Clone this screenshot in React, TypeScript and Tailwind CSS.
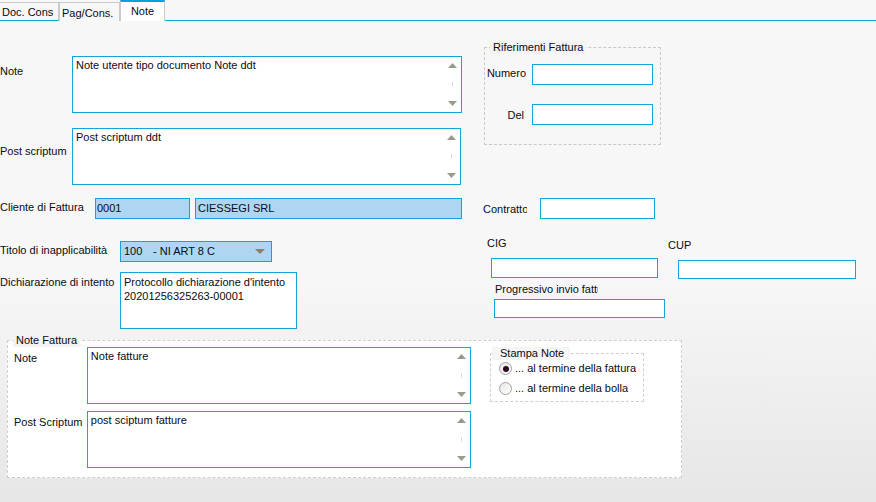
import type React from "react"

const cyan = "border-[#14a3dc]"

function Arrow({ up }: { up?: boolean }) {
  return (
    <svg width="9" height="5" viewBox="0 0 9 5">
      <path d={up ? "M0 5 L4.5 0 L9 5 Z" : "M0 0 L4.5 5 L9 0 Z"} fill="#9a9a8c" />
    </svg>
  )
}

function TextArea({ text, className, scroll = true }: { text: React.ReactNode; className: string; scroll?: boolean }) {
  return (
    <div className={`flex border ${cyan} bg-white ${className}`}>
      <div className="flex-1 pl-[3px] pt-[2px]">{text}</div>
      {scroll && (
        <div className="flex w-[17px] flex-col items-center justify-between py-[6px]">
          <Arrow up />
          <div className="h-[5px] w-px bg-[#dcdcdc]" />
          <Arrow />
        </div>
      )}
    </div>
  )
}

function Field({ className, value, filled }: { className: string; value?: string; filled?: boolean }) {
  return (
    <div className={`flex items-center border ${cyan} ${filled ? "bg-[#acd6f1]" : "bg-white"} ${className}`}>
      {value}
    </div>
  )
}

function Radio({ checked, label }: { checked?: boolean; label: string }) {
  return (
    <div className="flex h-[13px] items-center">
      <div className="flex h-[13px] w-[13px] items-center justify-center rounded-full border border-[#a3a39a] bg-gradient-to-br from-[#e6e6e6] to-white">
        {checked && <div className="h-[6px] w-[6px] rounded-full bg-[#2c0a24]" />}
      </div>
      <span className="ml-[3px] whitespace-nowrap">{label}</span>
    </div>
  )
}

export default function App() {
  return (
    <div className="h-[502px] w-[876px] overflow-hidden bg-linear-to-b from-[#f7f7f7] from-55% to-[#e6e6e6] font-['Liberation_Sans',Arial,sans-serif] text-[11px] leading-[13px] text-[#0b0b14]">
      {/* tab strip */}
      <div className="flex h-[21px] items-end">
        <div className="h-[19px] w-[59px] border-t border-r border-b border-t-[#c6cdc6] border-r-[#c6cdc6] border-b-[#14a3dc] pl-[2px] pt-[3px] whitespace-nowrap">
          Doc. Cons
        </div>
        <div className="h-[19px] w-[61px] border-x border-t border-[#c6cdc6] pl-[2px] pt-[4px] whitespace-nowrap">
          Pag/Cons.
        </div>
        <div className="h-[21px] w-[45px] border-x border-t-2 border-x-[#c6cdc6] border-t-[#0aa0dc] bg-white pt-[3px] text-center">
          Note
        </div>
        <div className="h-[21px] flex-1 border-b border-[#14a3dc]" />
      </div>

      <div className="flex">
        {/* left column */}
        <div className="flex w-[462px] flex-col">
          <div className="mt-[35px] flex h-[57px]">
            <div className="w-[72px] pt-[9px]">Note</div>
            <TextArea className="w-[390px]" text="Note utente tipo documento Note ddt" />
          </div>
          <div className="mt-[15px] flex h-[57px]">
            <div className="w-[72px] pt-[17px] whitespace-nowrap">Post scriptum</div>
            <TextArea className="w-[389px]" text="Post scriptum ddt" />
          </div>
          <div className="mt-[13px] flex h-[21px]">
            <div className="w-[95px] pt-[3px] whitespace-nowrap">Cliente di Fattura</div>
            <Field className="w-[95px] pl-[1px]" value="0001" filled />
            <Field className="ml-[5px] w-[267px] pl-[2px]" value="CIESSEGI SRL" filled />
          </div>
          <div className="mt-[22px] flex h-[21px]">
            <div className="w-[120px] pt-[3px] whitespace-nowrap">Titolo di inapplicabilità</div>
            <div className={`flex w-[152px] items-center border ${cyan} bg-[#acd6f1] pl-[3px] pr-[6px]`}>
              <span className="w-[29px]">100</span>
              <span className="flex-1">- NI ART 8 C</span>
              <svg width="10" height="5" viewBox="0 0 10 5">
                <path d="M0 0 L5 5 L10 0 Z" fill="#8c7f68" />
              </svg>
            </div>
          </div>
          <div className="mt-[10px] flex h-[57px]">
            <div className="w-[120px] pt-[4px] whitespace-nowrap">Dichiarazione di intento</div>
            <TextArea
              className="w-[177px] leading-[14px]"
              scroll={false}
              text={
                <>
                  Protocollo dichiarazione d'intento
                  <br />
                  20201256325263-00001
                </>
              }
            />
          </div>
        </div>

        {/* right column */}
        <div className="ml-[21px] flex flex-col">
          <fieldset className="ml-[1px] mt-[20px] h-[104px] w-[177px] border border-dashed border-[#c9c9c9] p-0">
            <legend className="ml-[5px] bg-[#f3f3f3] px-[3px] leading-[13px]">Riferimenti Fattura</legend>
            <div className="mt-[10px] flex h-[21px]">
              <div className="w-[41px] pt-[3px] text-right">Numero</div>
              <Field className="ml-[6px] w-[121px]" />
            </div>
            <div className="mt-[19px] flex h-[21px]">
              <div className="w-[39px] pt-[5px] text-right">Del</div>
              <Field className="ml-[8px] w-[121px]" />
            </div>
          </fieldset>

          <div className="mt-[53px] flex h-[21px]">
            <div className="w-[44px] overflow-hidden whitespace-nowrap pt-[5px]">Contratto</div>
            <Field className="ml-[13px] w-[115px]" />
          </div>

          <div className="mt-[18px] flex items-start">
            <div className="flex w-[185px] flex-col">
              <div className="pl-[4px]">CIG</div>
              <Field className="ml-[8px] mt-[8px] h-[20px] w-[167px]" />
              <div className="ml-[12px] mt-[5px] w-[103px] overflow-hidden whitespace-nowrap">Progressivo invio fattura</div>
              <Field className="ml-[11px] mt-[3px] h-[19px] w-[171px]" />
            </div>
            <div className="flex flex-col pt-[2px]">
              <div>CUP</div>
              <Field className="ml-[10px] mt-[8px] h-[19px] w-[178px]" />
            </div>
          </div>
        </div>
      </div>

      {/* Note Fattura */}
      <fieldset className="ml-[7px] mt-[4px] h-[145px] w-[675px] border border-dashed border-[#cfcfcf] bg-white p-0">
        <legend className="ml-[5px] h-[14px] bg-[#f2f2f2] px-[3px] leading-[14px]">Note Fattura</legend>
        <div className="flex">
          <div className="flex w-[463px] flex-col">
            <div className="flex h-[57px]">
              <div className="w-[79px] pl-[6px] pt-[5px]">Note</div>
              <TextArea className="w-[385px]" text="Note fatture" />
            </div>
            <div className="mt-[7px] flex h-[57px]">
              <div className="w-[79px] pl-[6px] pt-[5px] whitespace-nowrap">Post Scriptum</div>
              <TextArea className="w-[385px]" text="post sciptum fatture" />
            </div>
          </div>
          <fieldset className="ml-[19px] w-[154px] self-start border border-dashed border-[#cfcfcf] p-0 pb-[6px] pl-[8px]">
            <legend className="-ml-[7px] bg-[#f5f5f5] pl-[8px] pr-[6px] leading-[13px]">Stampa Note</legend>
            <div className="mt-[2px]">
              <Radio checked label="... al termine della fattura" />
            </div>
            <div className="mt-[7px]">
              <Radio label="... al termine della bolla" />
            </div>
          </fieldset>
        </div>
      </fieldset>
    </div>
  )
}
